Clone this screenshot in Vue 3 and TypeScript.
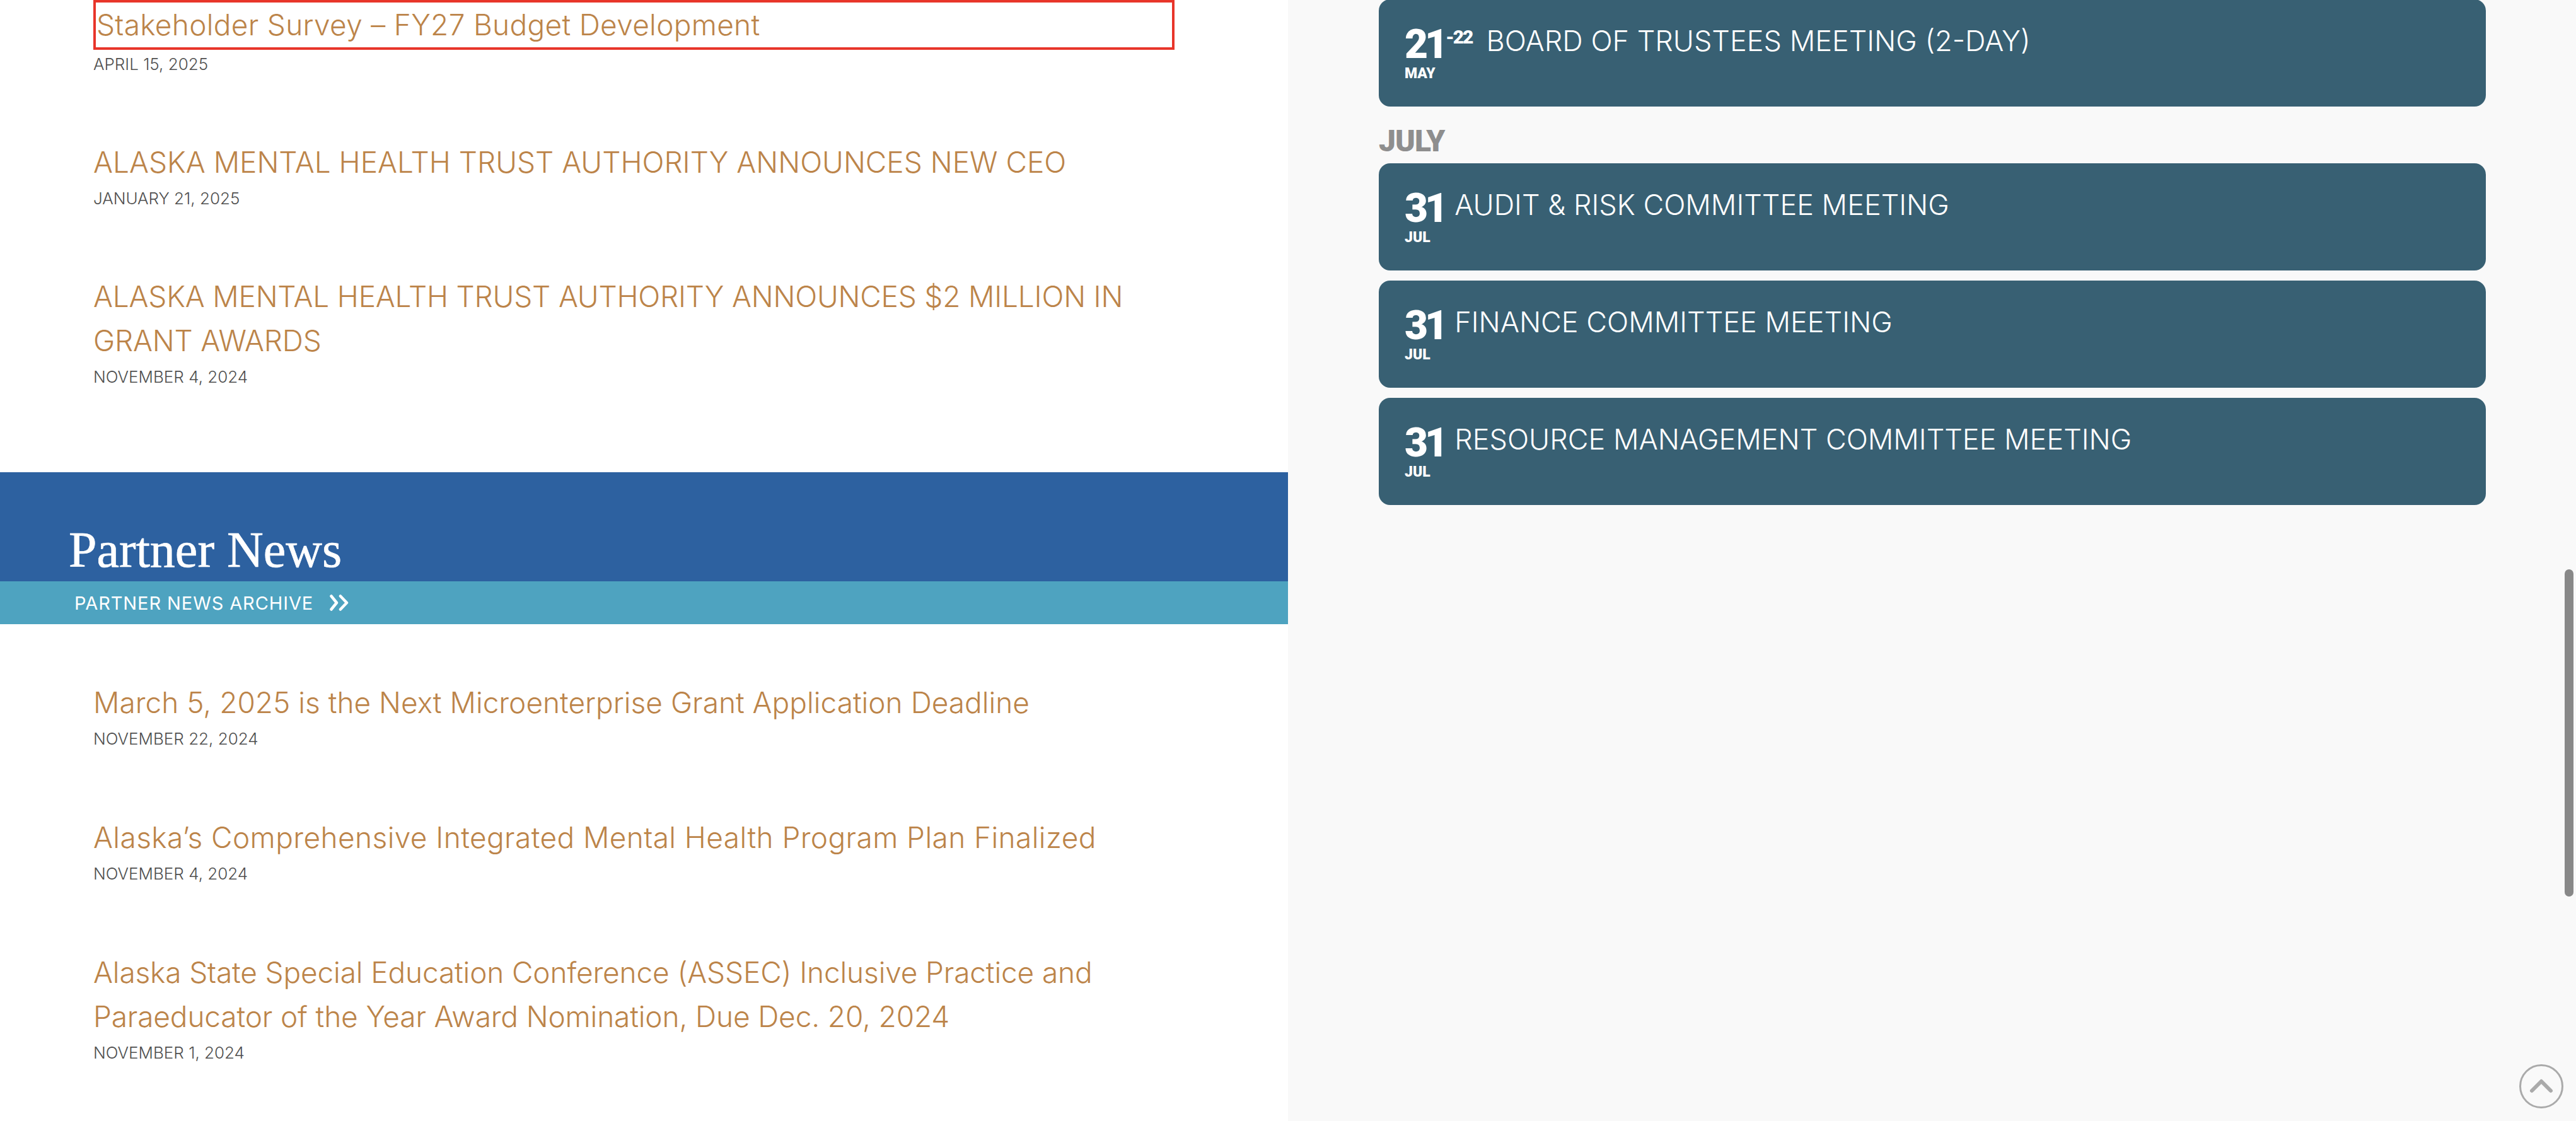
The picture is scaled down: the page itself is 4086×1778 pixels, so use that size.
<script setup lang="ts">
interface NewsItem {
  title: string
  date: string
  outlined?: boolean
  tracking?: number
}

interface Meeting {
  day: string
  until?: string
  month: string
  title: string
}

const trustNews: NewsItem[] = [
  { title: 'Stakeholder Survey – FY27 Budget Development', date: 'APRIL 15, 2025', outlined: true, tracking: 0.3 },
  { title: 'ALASKA MENTAL HEALTH TRUST AUTHORITY ANNOUNCES NEW CEO', date: 'JANUARY 21, 2025' },
  { title: 'ALASKA MENTAL HEALTH TRUST AUTHORITY ANNOUNCES $2 MILLION IN GRANT AWARDS', date: 'NOVEMBER 4, 2024', tracking: -0.2 }
]

const partnerNews: NewsItem[] = [
  { title: 'March 5, 2025 is the Next Microenterprise Grant Application Deadline', date: 'NOVEMBER 22, 2024' },
  { title: 'Alaska’s Comprehensive Integrated Mental Health Program Plan Finalized', date: 'NOVEMBER 4, 2024', tracking: 0.4 },
  { title: 'Alaska State Special Education Conference (ASSEC) Inclusive Practice and Paraeducator of the Year Award Nomination, Due Dec. 20, 2024', date: 'NOVEMBER 1, 2024', tracking: -0.15 }
]

const mayMeetings: Meeting[] = [
  { day: '21', until: '-22', month: 'MAY', title: 'BOARD OF TRUSTEES MEETING (2-DAY)' }
]

const julyMeetings: Meeting[] = [
  { day: '31', month: 'JUL', title: 'AUDIT & RISK COMMITTEE MEETING' },
  { day: '31', month: 'JUL', title: 'FINANCE COMMITTEE MEETING' },
  { day: '31', month: 'JUL', title: 'RESOURCE MANAGEMENT COMMITTEE MEETING' }
]

// headline font is a stand-in, so each title gets a small width correction
const trackingStyle = (item: NewsItem) =>
  item.tracking ? { letterSpacing: `${item.tracking}px` } : undefined
</script>

<template>
  <div class="page">
    <main class="news-col">
      <section class="news-list first">
        <article v-for="item in trustNews" :key="item.title" class="news-item">
          <h3 class="news-title" :class="{ outlined: item.outlined }" :style="trackingStyle(item)">{{ item.title }}</h3>
          <p class="news-date">{{ item.date }}</p>
        </article>
      </section>

      <header class="band">
        <h2>Partner News</h2>
      </header>
      <div class="archive">
        <span>PARTNER NEWS ARCHIVE</span>
        <svg width="30" height="26" viewBox="0 0 30 26" fill="none" stroke="#fff" stroke-width="4.5" stroke-linecap="round" stroke-linejoin="round">
          <path d="M2.5 2.5 L11 13 L2.5 23.5" />
          <path d="M17 2.5 L27 13 L17 23.5" />
        </svg>
      </div>

      <section class="news-list second">
        <article v-for="item in partnerNews" :key="item.title" class="news-item">
          <h3 class="news-title" :style="trackingStyle(item)">{{ item.title }}</h3>
          <p class="news-date">{{ item.date }}</p>
        </article>
      </section>
    </main>

    <aside class="events-col">
      <div v-for="m in mayMeetings" :key="m.title" class="card">
        <div class="when">
          <div class="day">{{ m.day }}<sup v-if="m.until">{{ m.until }}</sup></div>
          <div class="month">{{ m.month }}</div>
        </div>
        <div class="card-title">{{ m.title }}</div>
      </div>

      <h4 class="month-label">JULY</h4>

      <div class="cards">
        <div v-for="m in julyMeetings" :key="m.title" class="card">
          <div class="when">
            <div class="day">{{ m.day }}</div>
            <div class="month">{{ m.month }}</div>
          </div>
          <div class="card-title">{{ m.title }}</div>
        </div>
      </div>
    </aside>

    <div class="scroll-thumb"></div>
    <svg class="to-top" width="74" height="74" viewBox="0 0 74 74" fill="none" stroke="#aaa" stroke-linecap="round" stroke-linejoin="round">
      <circle cx="37" cy="37" r="33.5" stroke-width="3" />
      <path d="M22 44 L37 29 L52 44" stroke-width="6" />
    </svg>
  </div>
</template>

<style>
html,
body {
  margin: 0;
  background: #fff;
  overflow: hidden;
}
</style>

<style scoped>
.page {
  position: relative;
  width: 4086px;
  height: 1778px;
  overflow: hidden;
  display: grid;
  grid-template-columns: 2043px 1fr;
  font-family: Inter, "Open Sans", sans-serif;
}

.news-col {
  background: #fff;
}

.news-list {
  display: flex;
  flex-direction: column;
  gap: 102px;
  padding-left: 148px;
}

.news-list.first {
  padding-bottom: 133px;
}

.news-list.second {
  gap: 103px;
  padding-top: 89px;
}

.news-title {
  margin: 0;
  width: 1700px;
  font-size: 46px;
  line-height: 70px;
  font-weight: 300;
  color: #bc8449;
}

.news-title.outlined {
  width: 1715px;
  box-sizing: border-box;
  height: 79px;
  padding-left: 1px;
  border: 4px solid #e8352a;
  line-height: 70px;
}

.news-date {
  margin: 5px 0 0;
  font-size: 26px;
  line-height: 36px;
  font-weight: 300;
  color: #4f4f4f;
}

.band {
  height: 173px;
  box-sizing: border-box;
  padding: 78px 0 0 109px;
  background: #2d61a0;
}

.band h2 {
  margin: 0;
  font-family: "Liberation Serif", serif;
  font-size: 80px;
  line-height: 90px;
  font-weight: 400;
  -webkit-text-stroke: 0.7px #fff;
  color: #fff;
}

.archive {
  height: 68px;
  display: flex;
  align-items: center;
  gap: 26px;
  padding-left: 118px;
  background: #4ea3c0;
  color: #fff;
  font-size: 29px;
  letter-spacing: 0.9px;
  font-weight: 400;
}

.events-col {
  padding: 0 143px 0 144px;
  margin-top: -1px;
  background: #f9f9f9;
}

.cards {
  display: flex;
  flex-direction: column;
  gap: 16px;
}

.card {
  height: 170px;
  box-sizing: border-box;
  display: flex;
  gap: 15px;
  padding: 41px 0 0 41px;
  border-radius: 18px;
  background: #386073;
  color: #fff;
}

.when {
  font-family: Roboto, sans-serif;
  font-weight: 900;
}

.day {
  display: flex;
  align-items: flex-start;
  font-size: 64px;
  line-height: 62px;
  letter-spacing: -5px;
}

.day sup {
  margin: 4px 7px 0 1px;
  font-size: 30px;
  line-height: 30px;
  letter-spacing: -2px;
}

.month {
  margin-top: 4px;
  font-size: 23px;
  line-height: 22px;
}

.card-title {
  font-size: 45px;
  line-height: 50px;
  font-weight: 300;
}

.month-label {
  margin: 27px 0 7px;
  font-family: Roboto, sans-serif;
  font-size: 48px;
  line-height: 56px;
  font-weight: 900;
  letter-spacing: -1px;
  color: #8e8e8e;
}

.scroll-thumb {
  position: absolute;
  left: 4068px;
  top: 903px;
  width: 14px;
  height: 519px;
  border-radius: 7px;
  background: #888;
}

.to-top {
  position: absolute;
  left: 3994px;
  top: 1686px;
}
</style>
